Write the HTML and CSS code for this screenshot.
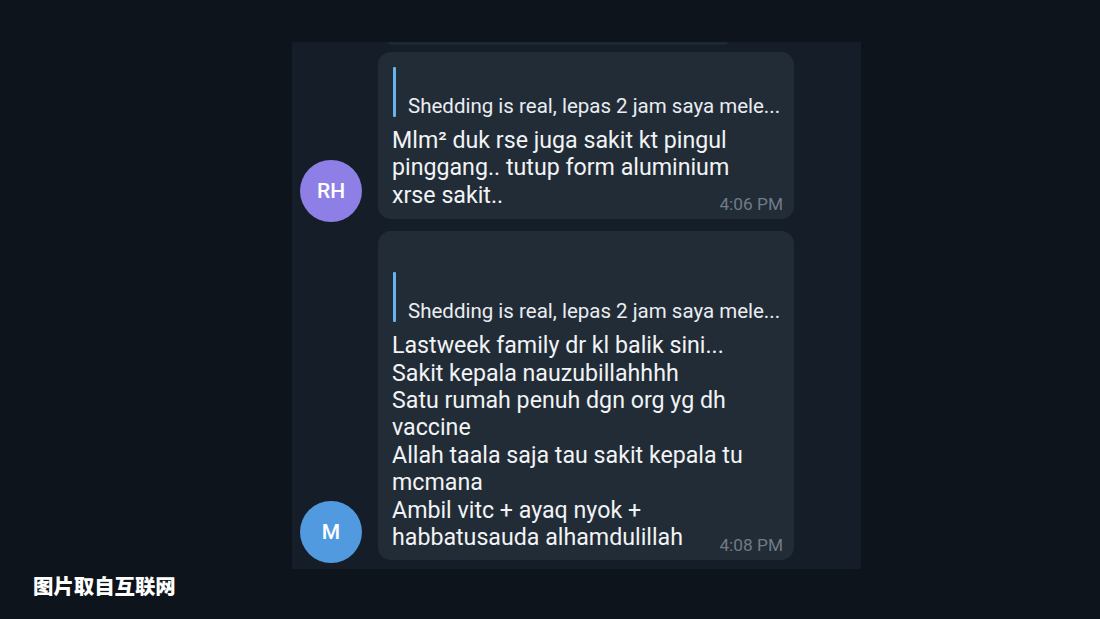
FILE: index.html
```html
<!DOCTYPE html>
<html>
<head>
<meta charset="utf-8">
<link rel="stylesheet" href="styles.css">
</head>
<body>
<div class="page">
  <div class="panel">
    <div class="prev-edge"></div>
    <div class="row row-first">
      <div class="avatar avatar-rh">RH</div>
      <div class="bubble">
        <div class="quote">
          <div class="quote-bar"></div>
          <div class="quote-text">Shedding is real, lepas 2 jam saya mele...</div>
        </div>
        <div class="msg">Mlm² duk rse juga sakit kt pingul<br>pinggang.. tutup form aluminium<br>xrse sakit..</div>
        <div class="time">4:06 PM</div>
      </div>
    </div>
    <div class="row row-second">
      <div class="avatar avatar-m">M</div>
      <div class="bubble bubble-tall">
        <div class="quote">
          <div class="quote-bar"></div>
          <div class="quote-text">Shedding is real, lepas 2 jam saya mele...</div>
        </div>
        <div class="msg">Lastweek family dr kl balik sini...<br>Sakit kepala nauzubillahhhh<br>Satu rumah penuh dgn org yg dh<br>vaccine<br>Allah taala saja tau sakit kepala tu<br>mcmana<br>Ambil vitc + ayaq nyok +<br>habbatusauda alhamdulillah</div>
        <div class="time">4:08 PM</div>
      </div>
    </div>
  </div>
  <div class="caption">图片取自互联网</div>
</div>
</body>
</html>
```

FILE: styles.css
```css
html, body {
  margin: 0;
  padding: 0;
  background: #0e141c;
  width: 1100px;
  height: 619px;
  overflow: hidden;
}
.page {
  position: relative;
  width: 1100px;
  height: 619px;
  padding-top: 42px;
  box-sizing: border-box;
}
.panel {
  margin-left: 292px;
  width: 569px;
  height: 527px;
  background: #151e28;
  box-sizing: border-box;
  padding: 0 8px 8px 8px;
  display: flex;
  flex-direction: column;
  font-family: Roboto, "Noto Sans", sans-serif;
}
.prev-edge {
  margin-left: 88px;
  width: 340px;
  height: 3px;
  background: #1e2833;
  border-radius: 0 0 6px 6px;
  margin-bottom: 7px;
}
.row {
  display: flex;
  align-items: flex-end;
  gap: 16px;
}
.row-second {
  margin-top: 12px;
}
.avatar {
  width: 62px;
  height: 62px;
  border-radius: 50%;
  flex: none;
  display: flex;
  align-items: center;
  justify-content: center;
  color: #ffffff;
  font-size: 21px;
  font-weight: 500;
  margin-bottom: -3px;
}
.avatar-rh { background: #8d7fe6; }
.avatar-m { background: #519ae0; }
.bubble {
  position: relative;
  width: 416px;
  box-sizing: border-box;
  background: #222c37;
  border-radius: 13px;
  padding: 15px 10px 10px 14px;
}
.bubble-tall {
  padding-top: 41px;
  padding-bottom: 9px;
}
.quote {
  display: flex;
  align-items: flex-end;
  height: 50px;
  gap: 12px;
  margin-left: 1px;
}
.quote-bar {
  width: 3px;
  height: 50px;
  background: #65b3ef;
  border-radius: 1px;
  flex: none;
}
.quote-text {
  color: #e9edf1;
  font-size: 20.5px;
  line-height: 24px;
  white-space: nowrap;
  margin-bottom: -1px;
}
.msg {
  margin-top: 10px;
  color: #f1f3f5;
  font-size: 23.2px;
  line-height: 27.4px;
  white-space: nowrap;
}
.time {
  position: absolute;
  right: 11px;
  bottom: 5px;
  color: #6f7b88;
  font-size: 17.3px;
  line-height: 20px;
}
.caption {
  position: absolute;
  left: 33px;
  top: 573px;
  color: #ffffff;
  font-family: "Noto Sans CJK SC", sans-serif;
  font-weight: 900;
  font-size: 20.4px;
  line-height: 24px;
}
```
